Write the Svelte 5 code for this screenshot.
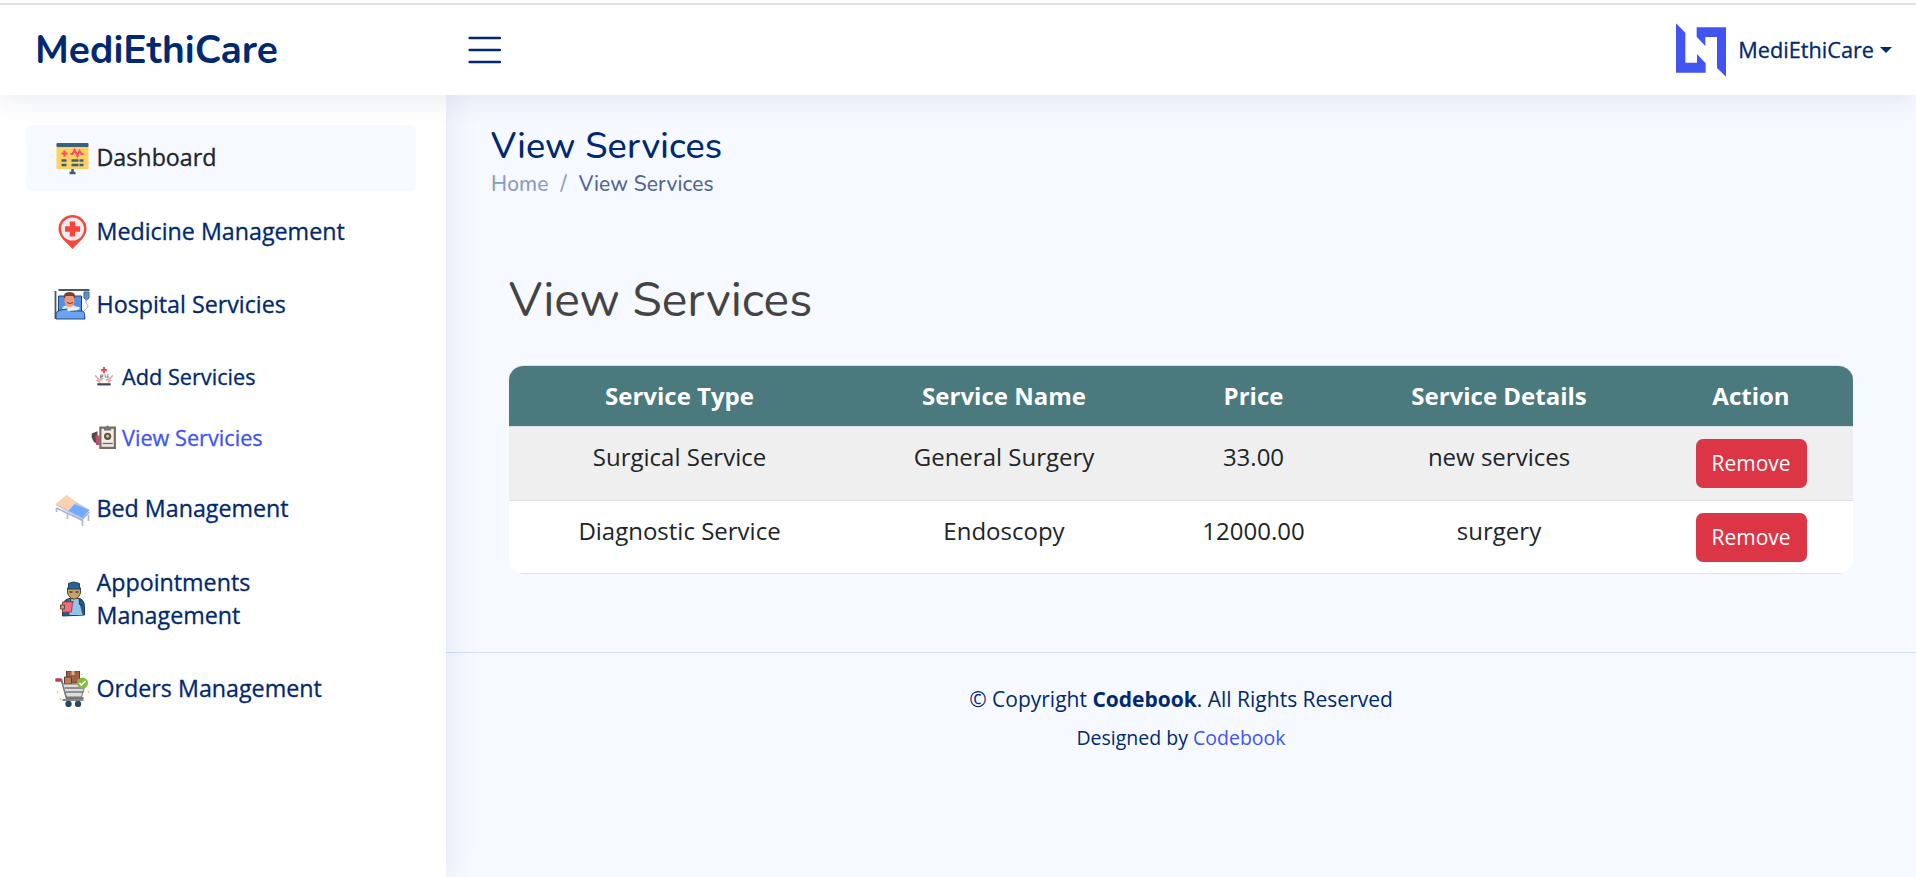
<script>
  const rows = [
    ['Surgical Service', 'General Surgery', '33.00', 'new services'],
    ['Diagnostic Service', 'Endoscopy', '12000.00', 'surgery']
  ];
  const heads = ['Service Type', 'Service Name', 'Price', 'Service Details', 'Action'];
</script>

{#snippet icon(name)}
  <svg class="ico" viewBox="0 0 36 36" aria-hidden="true">
    {#if name === 'board'}
      <path d="M2 4h32v24q0 1-1 1H3q-1 0-1-1z" fill="#ffd066" />
      <rect x="2" y="3" width="32" height="4" rx="1" fill="#36617c" />
      <path d="M7 13.500h6M10 10.500v6" stroke="#fb4c67" stroke-width="2.200" />
      <path d="M16 14h2l2-4 3 6 2-5 2 3h2" fill="none" stroke="#fb4c67" stroke-width="2" />
      <path d="M7 20.500h5M7 25h5M17 20.500h7M25 20.500h4M17 25h7M25 25h4" stroke="#36617c" stroke-width="2.600" />
      <path d="M18 29v4M15 33h6" stroke="#36617c" stroke-width="2.500" />
    {:else if name === 'pin'}
      <path d="M18 35C12 28 4 23 4 15a14 14 0 0 1 28 0c0 8-8 13-14 20z" fill="#f8453a" />
      <circle cx="18" cy="15" r="11.500" fill="#ececf0" />
      <path d="M18 7.500v15M10.500 15h15" stroke="#f8453a" stroke-width="5.500" />
    {:else if name === 'patient'}
      <path d="M1 32V4M4 3h31M1 30h28" stroke="#4b5965" stroke-width="1.800" fill="none" />
      <path d="M4 9h23v17H4z" fill="#4f8df0" stroke="#28466b" />
      <path d="M8 20q7-5 15 0v5H8z" fill="#dfe8ee" />
      <path d="M10 9h10v6q-1 5-5 5t-5-5z" fill="#ef9a77" />
      <path d="M9.500 12q-1.500-7 5.500-7t5.500 7l-2-3h-7z" fill="#77412d" />
      <path d="M12.500 15.500q3 2 6 0" stroke="#6d3a35" fill="none" />
      <path d="M1.500 27q0-3 5-4l6-1 4 2h12q2 1 2 8h-29z" fill="#69a4f5" stroke="#304a67" />
      <path d="M13 23l12-2" stroke="#edf3fa" stroke-width="2.500" />
      <path d="M29.500 5h5v6l-2.500 2-2.500-2z" fill="#5d94cf" stroke="#45627c" />
      <path d="M31.500 13v3q4 3 0 6l-2 2" fill="none" stroke="#aab0b6" />
    {:else if name === 'hands'}
      <path d="M18 2v11M12.500 7.500h11" stroke="#df5360" stroke-width="4" />
      <path d="M2 17l8 8h5M34 17l-8 8h-5M5 25l6 5M31 25l-6 5" fill="none" stroke="#e5aaa9" stroke-width="3" />
      <path d="M12 22v-6h4v3h-4v3h5M20 15v5h6M25 14v8" fill="none" stroke="#77747a" stroke-width="1.500" />
      <path d="M6 33h24" stroke="#41444f" stroke-width="4" />
    {:else if name === 'clip'}
      <path d="M1 13l8-3v18l-5-3-3-6z" fill="#53484c" />
      <path d="M6 16h6v13H7z" fill="#bd5068" />
      <path d="M13 5h20v28H13z" fill="#f1eee7" stroke="#796a5b" stroke-width="3" />
      <path d="M18 6q1-2 3-2 2-4 4 0 2 0 3 2v3H18z" fill="#77736f" />
      <circle cx="23" cy="17" r="5" fill="#5a554a" /><circle cx="23" cy="17" r="2" fill="#e3c576" />
      <path d="M16 27h14" stroke="#6d6860" stroke-width="1.800" />
    {:else if name === 'bed'}
      <path d="M2 17v4M28 29v6M34 24v6M13 23v5" stroke="#aeb8d4" stroke-width="1.700" />
      <path d="M1 14l11-9 23 14-8 10z" fill="#c4cbe1" />
      <path d="M1 13L12 4l10 7-8 8z" fill="#f9d1ad" />
      <path d="M20 13l15 6-7 8-14-7z" fill="#73aaff" />
      <path d="M2 17l25 12 8-8" fill="none" stroke="#aab4d2" stroke-width="1.500" />
    {:else if name === 'doctor'}
      <path d="M8 35V23q2-5 9-6h5q8 0 8 9v8z" fill="#245b8e" stroke="#24394b" />
      <path d="M15 18h9l4 16H15z" fill="#91c5eb" />
      <path d="M13 7h13v5q-2 6-6.500 6T13 12z" fill="#cba064" stroke="#544433" />
      <path d="M14 6V2.500q5-3 11 0V6l1 2H13z" fill="#23649c" stroke="#253f54" />
      <path d="M15 11h3M21 11h3" stroke="#473e36" stroke-width="1.500" />
      <path d="M16 17v4h3M25 17v6l3 2" fill="none" stroke="#2b4353" stroke-width="1.300" />
      <path d="M8 21h10l-1 10H8z" fill="#f46e82" stroke="#ae3d51" />
      <path d="M6 24h4v4H6z" fill="#cba064" stroke="#604936" />
    {:else}
      <path d="M12 0h13v12H12z" fill="#9c6146" stroke="#5d4035" /><path d="M10 6h7v7h-7z" fill="#bd7d55" stroke="#5d4035" />
      <path d="M17 0h3v4h-3z" fill="#e2b080" />
      <path d="M1 9h6l5 18h17" fill="none" stroke="#777" stroke-width="1.800" />
      <path d="M1 9h6" stroke="#b93f59" stroke-width="3.500" />
      <path d="M8 13h20l2 3-3 10H12z" fill="#ddd" stroke="#777" />
      <path d="M10 17h19M11 21h18" stroke="#777" stroke-width="1.300" />
      <path d="M8 29h21" stroke="#858585" stroke-width="2" />
      <circle cx="14" cy="33" r="3.200" fill="#29496b" /><circle cx="23.500" cy="33" r="3.200" fill="#29496b" />
      <circle cx="28" cy="12" r="5.500" fill="#82bd3d" /><path d="M25 12l2 2 4-4" fill="none" stroke="#fff" stroke-width="1.600" />
      <path d="M3 20v2M6 27v2M34 20v2M27 3v1" stroke="#f3c66a" stroke-width="1.500" />
    {/if}
  </svg>
{/snippet}

<div class="page">
  <div class="strip"></div>
  <header>
    <div class="brand">MediEthiCare</div>
    <svg class="menu" viewBox="0 0 33 28"><path d="M1.500 2h30.500M1.500 14h30.500M1.500 26h30.500" stroke="#012970" stroke-width="2.300" stroke-linecap="round" /></svg>
    <div class="profile">
      <svg class="logo" viewBox="0 0 150 160" fill="#4154f1"><path d="M0 0l28 28v90h35V92l26 28v28H0zM62 12h88v148l-27-26V41H88v27L62 40z" /></svg>
      <span>MediEthiCare</span><i class="caret"></i>
    </div>
  </header>
  <div class="body">
    <aside>
      <a class="item active">{@render icon('board')}<span>Dashboard</span></a>
      <a class="item">{@render icon('pin')}<span>Medicine Management</span></a>
      <a class="item">{@render icon('patient')}<span>Hospital Servicies</span></a>
      <div class="subs">
        <a class="sub small">{@render icon('hands')}<span>Add Servicies</span></a>
        <a class="sub current">{@render icon('clip')}<span>View Servicies</span></a>
      </div>
      <a class="item">{@render icon('bed')}<span>Bed Management</span></a>
      <a class="item tall">{@render icon('doctor')}<span>Appointments<br />Management</span></a>
      <a class="item">{@render icon('cart')}<span>Orders Management</span></a>
    </aside>
    <main>
      <h2>View Services</h2>
      <nav><span class="home">Home</span><span class="slash">/</span><span>View Services</span></nav>
      <h1>View Services</h1>
      <div class="table">
        <div class="row head">{#each heads as h}<div>{h}</div>{/each}</div>
        {#each rows as r}
          <div class="row">{#each r as c}<div>{c}</div>{/each}<div><button>Remove</button></div></div>
        {/each}
      </div>
      <footer>
        <div class="copy">© Copyright <strong>Codebook</strong>. All Rights Reserved</div>
        <div class="credits">Designed by <a>Codebook</a></div>
      </footer>
    </main>
  </div>
</div>

<style>
  :global(body) { background: #fff; overflow: hidden; }
  * { box-sizing: border-box; }
  .page { height: 877px; display: flex; flex-direction: column; font-family: 'Open Sans', sans-serif; color: #012970; overflow: hidden; }
  .strip { height: 5px; flex: none; border-bottom: 2px solid #e0e0e0; background: #fff; position: relative; z-index: 3; }
  header { height: 90px; flex: none; background: #fff; box-shadow: 0 3px 30px rgba(1, 41, 112, .1); position: relative; z-index: 2; display: flex; align-items: center; padding: 0 24px 0 35px; }
  .brand { width: 433px; padding-top: 1px; font: 700 39px/90px Nunito, Lato, sans-serif; }
  .menu { width: 33px; height: 28px; }
  .profile { margin-left: auto; display: flex; align-items: center; font-size: 21.700px; font-weight: 500; }
  .profile span, .item span, .sub span { -webkit-text-stroke: .3px currentColor; }
  .profile span { margin-top: -2px; }
  .logo { width: 50px; height: 54px; margin-right: 12px; }
  .caret { border: 6px solid transparent; border-top-color: #012970; border-bottom: 0; margin: -1px 0 0 6px; }
  .body { flex: 1; display: flex; min-height: 0; }
  aside { width: 446px; flex: none; background: #fff; box-shadow: 0 0 30px rgba(1, 41, 112, .1); position: relative; z-index: 1; padding: 30px 30px 0 26px; }
  .item { display: flex; align-items: center; min-height: 66px; padding: 0 0 0 28px; margin-bottom: 7.500px; font-size: 23.250px; line-height: 33px; font-weight: 500; border-radius: 6px; }
  .item span { margin-top: -1px; }
  .active span { margin-top: -2px; }
  .tall { min-height: 99px; }
  .active { background: #f6f9ff; color: #212529; }
  .ico { width: 37px; height: 36px; flex: none; margin-right: 5.500px; }
  .subs { height: 130.500px; }
  .sub { display: flex; align-items: center; height: 61px; padding-left: 65px; font-size: 21.700px; font-weight: 500; }
  .sub .ico { width: 26px; height: 26px; margin-right: 5px; }
  .sub.small .ico { width: 20px; height: 20px; margin: 0 8px 0 3px; }
  .current { color: #4154f1; }
  main { flex: 1; background: #f6f9ff; }
  h2 { margin: 30px 0 0 45px; font: 500 36px/43px Nunito, Lato, sans-serif; letter-spacing: .17px; }
  nav { margin: 1px 0 0 45px; display: flex; gap: 12px; font: 500 21px/31px Nunito, Lato, sans-serif; letter-spacing: .1px; color: #51678f; }
  .home, .slash { color: #899bbd; }
  h1 { margin: 71px 0 0 63px; font: 400 48px/58px Nunito, Lato, sans-serif; color: #444; }
  .table { margin: 36px 63px 0; border-radius: 15px; overflow: hidden; background: #fff; font-size: 24px; line-height: 36px; color: #212529; border-top: 1px solid #dee2e6; }
  .row { display: grid; grid-template-columns: 341px 308px 191px 300px 1fr; text-align: center; height: 73px; padding-top: 12px; border-bottom: 1px solid #dee2e6; }
  .row:nth-child(2) { background: #efefef; height: 74px; }
  .row.head { background: #4a797e; color: #fff; font-weight: 700; height: 61px; }
  button { display: block; margin: 0 auto; width: 111px; height: 48.500px; border: 0; border-radius: 7px; background: #dc3545; color: #fff; font: 400 21px/32px 'Open Sans', sans-serif; padding: 0; }
  footer { margin-top: 78px; border-top: 1px solid #cddfff; padding-top: 30px; text-align: center; }
  .copy { font-size: 21px; line-height: 32px; }
  .credits { margin-top: 8px; font-size: 19.500px; line-height: 30px; }
  .credits a { color: #4154f1; }
</style>
